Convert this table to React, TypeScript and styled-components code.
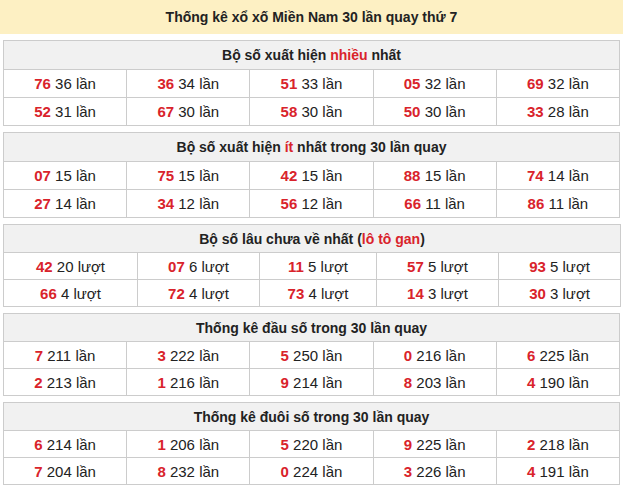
import type { ReactNode } from 'react';
import styled, { createGlobalStyle } from 'styled-components';

type Item = [string, string];

type Section = {
  title: ReactNode;
  unit: string;
  rows: Item[][];
  compact?: boolean;
  widths?: number[];
};

const Global = createGlobalStyle`
  body {
    margin: 0;
    background: #ffffff;
    font-family: "Liberation Sans", Arial, sans-serif;
    color: #222222;
  }
`;

const Page = styled.div`
  width: 623px;
`;

const TitleBar = styled.div`
  height: 34px;
  display: flex;
  align-items: center;
  justify-content: center;
  background: #fdf0c3;
  font-size: 14px;
  font-weight: 700;
  color: #222222;
`;

const Tables = styled.div`
  display: flex;
  flex-direction: column;
  gap: 6px;
  padding: 6px 3px 0;
`;

const StatTable = styled.table<{ $compact: boolean }>`
  width: 100%;
  border-collapse: collapse;
  table-layout: fixed;

  th,
  td {
    border: 1px solid #cccccc;
    padding: 0;
  }

  th {
    height: ${(p) => (p.$compact ? 27 : 28)}px;
  }

  td {
    height: ${(p) => (p.$compact ? 26 : 27)}px;
  }
`;

const HeadCell = styled.th`
  background: #f1f1f1;
  font-size: 14px;
  font-weight: 700;
  color: #222222;
  text-align: center;
`;

const Hot = styled.span`
  color: #d9232b;
`;

const Cell = styled.td`
  text-align: center;
  font-size: 15px;
  color: #222222;
  white-space: nowrap;
`;

const Num = styled.b`
  color: #d9232b;
`;

const sections: Section[] = [
  {
    title: (
      <>
        Bộ số xuất hiện <Hot>nhiều</Hot> nhất
      </>
    ),
    unit: 'lần',
    rows: [
      [['76', '36'], ['36', '34'], ['51', '33'], ['05', '32'], ['69', '32']],
      [['52', '31'], ['67', '30'], ['58', '30'], ['50', '30'], ['33', '28']],
    ],
  },
  {
    title: (
      <>
        Bộ số xuất hiện <Hot>ít</Hot> nhất trong 30 lần quay
      </>
    ),
    unit: 'lần',
    rows: [
      [['07', '15'], ['75', '15'], ['42', '15'], ['88', '15'], ['74', '14']],
      [['27', '14'], ['34', '12'], ['56', '12'], ['66', '11'], ['86', '11']],
    ],
  },
  {
    title: (
      <>
        Bộ số lâu chưa về nhất (<Hot>lô tô gan</Hot>)
      </>
    ),
    unit: 'lượt',
    compact: true,
    widths: [134, 122, 117, 122, 122],
    rows: [
      [['42', '20'], ['07', '6'], ['11', '5'], ['57', '5'], ['93', '5']],
      [['66', '4'], ['72', '4'], ['73', '4'], ['14', '3'], ['30', '3']],
    ],
  },
  {
    title: 'Thống kê đầu số trong 30 lần quay',
    unit: 'lần',
    compact: true,
    rows: [
      [['7', '211'], ['3', '222'], ['5', '250'], ['0', '216'], ['6', '225']],
      [['2', '213'], ['1', '216'], ['9', '214'], ['8', '203'], ['4', '190']],
    ],
  },
  {
    title: 'Thống kê đuôi số trong 30 lần quay',
    unit: 'lần',
    compact: true,
    rows: [
      [['6', '214'], ['1', '206'], ['5', '220'], ['9', '225'], ['2', '218']],
      [['7', '204'], ['8', '232'], ['0', '224'], ['3', '226'], ['4', '191']],
    ],
  },
];

export default function App() {
  return (
    <>
      <Global />
      <Page>
        <TitleBar>Thống kê xổ xố Miền Nam 30 lần quay thứ 7</TitleBar>
        <Tables>
          {sections.map((s, i) => (
            <StatTable key={i} $compact={!!s.compact}>
              <colgroup>
                {(s.widths || [1, 1, 1, 1, 1]).map((w, j) => (
                  <col key={j} style={{ width: s.widths ? `${w}px` : '20%' }} />
                ))}
              </colgroup>
              <thead>
                <tr>
                  <HeadCell colSpan={5}>{s.title}</HeadCell>
                </tr>
              </thead>
              <tbody>
                {s.rows.map((row, r) => (
                  <tr key={r}>
                    {row.map(([num, count], c) => (
                      <Cell key={c}>
                        <Num>{num}</Num> {count} {s.unit}
                      </Cell>
                    ))}
                  </tr>
                ))}
              </tbody>
            </StatTable>
          ))}
        </Tables>
      </Page>
    </>
  );
}
